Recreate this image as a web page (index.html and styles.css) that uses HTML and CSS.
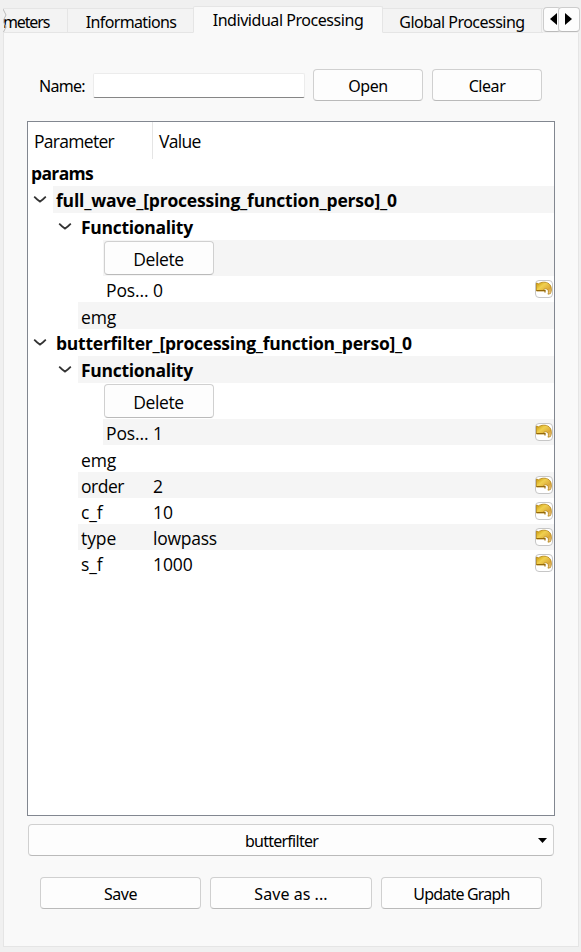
FILE: index.html
```html
<!DOCTYPE html>
<html lang="en">
<head>
<meta charset="utf-8">
<title>Individual Processing</title>
<link rel="stylesheet" href="styles.css">
</head>
<body>
<svg class="defs" width="0" height="0" aria-hidden="true">
  <defs>
    <linearGradient id="gold" x1="0" y1="0" x2="1" y2="1">
      <stop offset="0" stop-color="#c89600"/><stop offset=".35" stop-color="#f0d050"/><stop offset=".7" stop-color="#dba838"/><stop offset="1" stop-color="#f6d2b4"/>
    </linearGradient>
    <symbol id="undo" viewBox="0 0 16 16">
      <path d="M.5 2 2.500 2.800C5 .9 10 .4 13 2.800c2.900 2.600 2.900 6.800 1.400 9.800l-2.400.6c.9-2.700.4-4.700-1.400-5.200-1.100-.3-2.300-.3-2.600.4l1 1.600H.5z" fill="url(#gold)" stroke="#b48412" stroke-width=".8"/>
      <path d="M.500 9.500h8.500v2" fill="none" stroke="#94690a" stroke-width="1.200"/>
    </symbol>
    <symbol id="chev" viewBox="0 0 14 9"><path d="M1.200 1.700 4 4.200l3 2.500 3-2.500 2.800-2.500" fill="none" stroke="#333" stroke-width="1.800"/></symbol>
  </defs>
</svg>
<nav class="tabs">
  <div class="tab first"><span class="ui w-meters">meters</span><svg class="tear" viewBox="0 0 4 24"><path d="M0 0 3 6 0 12l3 6-3 6" fill="none" stroke="#bbb"/></svg></div>
  <div class="tab info"><span class="ui w-info">Informations</span></div>
  <div class="tab active"><span class="ui w-ind">Individual Processing</span></div>
  <div class="tab global"><span class="ui w-glob">Global Processing</span></div>
  <div class="tab rest"></div>
  <div class="scroll">
    <button class="left" aria-label="Scroll left"><svg viewBox="0 0 7 12"><path d="M7 0v12L0 6z"/></svg></button>
    <button class="right" aria-label="Scroll right"><svg viewBox="0 0 7 12"><path d="M0 0v12l7-6z"/></svg></button>
  </div>
</nav>
<main class="page">
  <div class="name-row">
    <label class="ui w-name" for="name">Name:</label>
    <input id="name" type="text">
    <button class="btn open"><span class="ui">Open</span></button>
    <button class="btn clear"><span class="ui">Clear</span></button>
  </div>
  <section class="tree">
    <header class="head"><div class="col"><span>Parameter</span></div><div><span>Value</span></div></header>
    <div class="row l0 bold"><div class="cell"><span class="w-params">params</span></div></div>
    <div class="row l1 bold alt tall"><svg class="chev"><use href="#chev"/></svg><div class="cell"><span class="w-full">full_wave_[processing_function_perso]_0</span></div></div>
    <div class="row l2 bold tall"><svg class="chev"><use href="#chev"/></svg><div class="cell"><span class="w-func">Functionality</span></div></div>
    <div class="row l3 alt action"><div class="cell"><button class="btn delete"><span>Delete</span></button></div></div>
    <div class="row l3"><div class="cell"><span class="key">Pos...</span><span class="val">0</span><i class="reset"><svg><use href="#undo"/></svg></i></div></div>
    <div class="row l2 alt tall"><div class="cell"><span class="solo">emg</span></div></div>
    <div class="row l1 bold tall"><svg class="chev"><use href="#chev"/></svg><div class="cell"><span class="w-butter">butterfilter_[processing_function_perso]_0</span></div></div>
    <div class="row l2 bold alt tall"><svg class="chev"><use href="#chev"/></svg><div class="cell"><span class="w-func">Functionality</span></div></div>
    <div class="row l3 action"><div class="cell"><button class="btn delete"><span>Delete</span></button></div></div>
    <div class="row l3 alt"><div class="cell"><span class="key">Pos...</span><span class="val">1</span><i class="reset"><svg><use href="#undo"/></svg></i></div></div>
    <div class="row l2 tall"><div class="cell"><span class="solo">emg</span></div></div>
    <div class="row l2 alt"><div class="cell"><span class="key order">order</span><span class="val">2</span><i class="reset"><svg><use href="#undo"/></svg></i></div></div>
    <div class="row l2"><div class="cell"><span class="key">c_f</span><span class="val">10</span><i class="reset"><svg><use href="#undo"/></svg></i></div></div>
    <div class="row l2 alt"><div class="cell"><span class="key">type</span><span class="val lowpass">lowpass</span><i class="reset"><svg><use href="#undo"/></svg></i></div></div>
    <div class="row l2"><div class="cell"><span class="key">s_f</span><span class="val">1000</span><i class="reset"><svg><use href="#undo"/></svg></i></div></div>
  </section>
  <button class="btn combo"><span class="ui">butterfilter</span><svg class="drop" viewBox="0 0 9 5"><path d="M0 0h9L4.500 5z"/></svg></button>
  <footer class="actions">
    <button class="btn"><span class="ui">Save</span></button>
    <button class="btn"><span class="ui w-as">Save as ...</span></button>
    <button class="btn"><span class="ui w-update">Update Graph</span></button>
  </footer>
</main>
</body>
</html>
```

FILE: styles.css
```css
* { box-sizing: border-box; }
body { margin: 0; width: 581px; height: 952px; overflow: hidden; background: #f0f0f0; color: #000; font: 17.5px/26px "Open Sans", "Noto Sans", sans-serif; }
.defs { position: absolute; }
button { font: inherit; color: inherit; padding: 0; margin: 0; }
svg { display: block; }
.ui { display: inline-block; font-family: "Noto Sans", sans-serif; font-size: 16px; line-height: 22px; white-space: nowrap; letter-spacing: -0.45px; }
.w-meters { letter-spacing: -1.15px; }
.w-info { letter-spacing: -0.65px; }
.w-glob { letter-spacing: -0.52px; }
.w-as { letter-spacing: 0.05px; }
.w-update { letter-spacing: -0.8px; }
.tabs { display: flex; align-items: flex-end; height: 33px; padding-left: 3px; }
.tab { height: 25px; background: #f3f3f3; border: 1px solid #e5e5e5; border-left: 0; display: flex; justify-content: center; padding-top: 2px; }
.first { position: relative; width: 65px; justify-content: flex-start; overflow: hidden; }
.tear { position: absolute; left: 0; top: 0; width: 4px; height: 24px; }
.info { width: 125px; padding-left: 1px; border-right: 0; }
.active { width: 190px; height: 27px; background: #f9f9f9; border-left: 1px solid #e5e5e5; border-bottom-color: #f9f9f9; border-radius: 2px 2px 0 0; }
.global { width: 159px; }
.rest { width: 1px; border-right: 0; }
.scroll { display: flex; height: 26px; align-self: flex-end; }
.scroll button { height: 25px; background: #fdfdfd; border: 1px solid #ccc; border-bottom-color: #bababa; border-radius: 4px; display: flex; align-items: center; justify-content: center; padding-bottom: 2px; }
.scroll svg { width: 7px; height: 12px; }
.scroll .left { width: 18px; padding-left: 3px; }
.scroll .right { width: 22px; margin-left: -3px; padding-right: 2px; }
.page { width: 576px; height: 914px; margin-left: 3px; padding: 36px 23px 0; background: #f9f9f9; border: 1px solid #e5e5e5; border-top: 0; }
.name-row { display: flex; align-items: center; height: 32px; padding-left: 12px; }
.name-row label { width: 54px; padding-top: 1px; letter-spacing: -0.7px; }
.name-row input { width: 212px; height: 25px; margin: 0; padding: 0; background: #fff; border: 1px solid #ececec; border-bottom-color: #868686; border-radius: 2px; }
.btn { height: 32px; background: #fdfdfd; border: 1px solid #d0d0d0; border-bottom-color: #bababa; border-radius: 4px; text-align: center; }
.open, .clear { width: 110px; }
.open { margin: 0 9px 0 8px; }
.tree { width: 528px; height: 695px; margin-top: 20px; background: #fff; border: 1px solid #828790; letter-spacing: -0.1px; }
.head { display: flex; height: 38px; padding-right: 1px; line-height: 39px; letter-spacing: -0.7px; }
.head .col { width: 125px; height: 37px; border-right: 1px solid #e5e5e5; padding-left: 6px; margin-right: 6px; }
.row { display: flex; height: 26px; }
.tall { height: 27px; }
.action { height: 36px; }
.bold { font-weight: 700; }
.w-params { letter-spacing: -0.65px; }
.w-full { letter-spacing: -0.2px; }
.w-butter { letter-spacing: -0.245px; }
.w-func { letter-spacing: -0.3px; padding-top: 1px; }
.l1 { padding-left: 5px; }
.l2 { padding-left: 50px; }
.l3 { padding-left: 75px; }
.l2:has(.chev) { padding-left: 30px; }
.chev { width: 14px; height: 9px; margin: 9px 6px 0 0; }
.row .cell { display: flex; flex: 1; align-items: center; padding-left: 3px; white-space: nowrap; }
.alt .cell { background: #f5f5f5; }
.l3.action .cell { padding-left: 1px; }
.key, .val, .solo { padding-top: 2px; }
.key { width: 72px; }
.order { letter-spacing: -0.5px; }
.lowpass { letter-spacing: -0.25px; }
.l3 .key { width: 47px; }
.reset { width: 18px; height: 18px; margin-left: auto; margin-right: 1px; background: #fff; border: 1px solid #c6c6c6; border-radius: 4px; }
.reset svg { width: 16px; height: 16px; }
.delete { width: 110px; height: 34px; padding: 2px 1px 0 0; letter-spacing: -0.4px; }
.combo { display: flex; align-items: center; justify-content: center; width: 526px; margin: 8px 0 0 1px; padding: 2px 19px 0 0; position: relative; }
.combo .ui { letter-spacing: -0.75px; }
.drop { position: absolute; right: 6px; top: 13px; width: 9px; height: 5px; }
.actions { display: grid; grid-template-columns: 161px 162px 161px; column-gap: 9px; margin: 21px 0 0 13px; }
```
